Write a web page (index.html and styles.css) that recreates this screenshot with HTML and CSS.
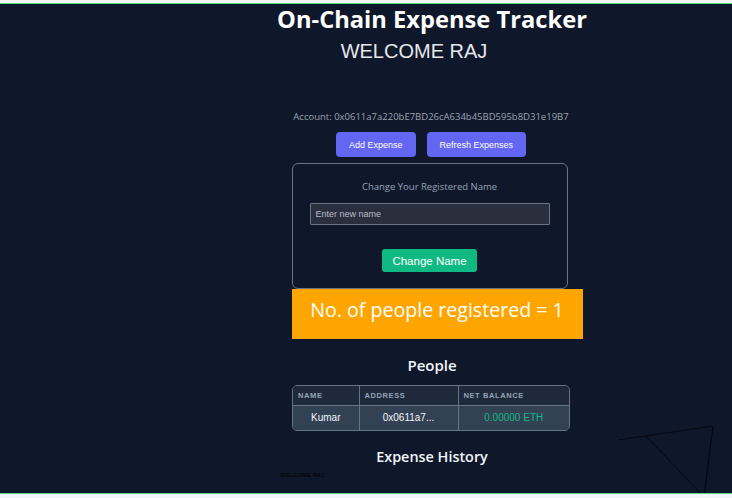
FILE: index.html
```html
<!DOCTYPE html>
<html>
<head>
<meta charset="utf-8">
<link rel="stylesheet" href="styles.css">
</head>
<body>
<div class="app">
  <main class="main">
    <h1 class="title">On-Chain Expense Tracker</h1>
    <h2 class="welcome">WELCOME RAJ</h2>
    <p class="account">Account: 0x0611a7a220bE7BD26cA634b45BD595b8D31e19B7</p>
    <div class="actions">
      <button class="btn btn-primary">Add Expense</button>
      <button class="btn btn-primary">Refresh Expenses</button>
    </div>
    <section class="card">
      <p class="card-title">Change Your Registered Name</p>
      <input class="name-input" type="text" placeholder="Enter new name">
      <button class="btn btn-green">Change Name</button>
    </section>
    <div class="count-bar">No. of people registered = 1</div>
    <h3 class="section-title people-title">People</h3>
    <div class="table-wrap">
      <table class="people">
        <thead>
          <tr><th class="c-name">Name</th><th class="c-addr">Address</th><th class="c-bal">Net Balance</th></tr>
        </thead>
        <tbody>
          <tr><td>Kumar</td><td>0x0611a7...</td><td class="bal">0.00000 ETH</td></tr>
        </tbody>
      </table>
    </div>
    <h3 class="section-title history-title">Expense History</h3>
    <p class="tiny">WELCOME RAJ</p>
  </main>
  <svg class="scribble" width="732" height="498" viewBox="0 0 732 498">
    <polyline points="618,440 713,426 704,498" fill="none" stroke="#05070d" stroke-width="1"/>
    <line x1="646" y1="436" x2="705" y2="498" stroke="#05070d" stroke-width="1"/>
  </svg>
</div>
</body>
</html>
```
FILE: styles.css
```css
* { box-sizing: border-box; }
html, body { margin: 0; padding: 0; }
body {
  background: #f3f4f6;
  width: 732px;
  height: 498px;
  overflow: hidden;
  padding-top: 3px;
  font-family: "Open Sans", "Noto Sans", sans-serif;
}
.app {
  position: relative;
  background: #0f172a;
  border-top: 1px solid #4ade80;
  border-bottom: 1px solid #4ade80;
  height: 491px;
  overflow: hidden;
}
.main {
  padding-left: 132px;
  display: flex;
  flex-direction: column;
  align-items: center;
}
.title {
  margin: 0;
  font-size: 23.7px;
  font-weight: 700;
  color: #ffffff;
  line-height: 28px;
  margin-top: 1px;
}
.welcome {
  margin: 6px 36px 0 0;
  font-family: "Liberation Sans", Arial, sans-serif;
  font-weight: 400;
  font-size: 20px;
  line-height: 24px;
  color: #e5e7eb;
}
.account {
  margin: 47px 2px 0 0;
  font-size: 9.5px;
  color: #9ca3af;
  line-height: 14px;
}
.actions {
  display: flex;
  gap: 11px;
  margin-top: 8px;
  margin-right: 2px;
}
.btn {
  border: none;
  cursor: pointer;
  color: #fff;
  font-family: "Liberation Sans", Arial, sans-serif;
}
.btn-primary {
  background: #6366f1;
  border-radius: 4px;
  height: 25px;
  font-size: 9px;
  padding: 0 13px;
}
.card {
  margin-top: 6px;
  width: 276px;
  height: 126px;
  border: 1px solid #6b7280;
  border-radius: 6px;
  display: flex;
  flex-direction: column;
  align-items: center;
  margin-left: -5px;
}
.card-title {
  margin: 16px 0 0;
  font-size: 9.5px;
  line-height: 14px;
  color: #94a3b8;
}
.name-input {
  margin-top: 9px;
  width: 240px;
  height: 22px;
  background: #2a2f3e;
  border: 1px solid #6b7280;
  border-radius: 1px;
  padding: 0 5px;
  font-family: "Liberation Sans", Arial, sans-serif;
  font-size: 9px;
  color: #e5e7eb;
}
.name-input::placeholder { color: #b6bcc8; }
.btn-green {
  margin-top: 24px;
  background: #10b981;
  border-radius: 3px;
  height: 23px;
  padding: 0 10px;
  font-size: 11.5px;
}
.count-bar {
  width: 291px;
  height: 50px;
  background: #ffa500;
  color: #fff;
  font-size: 19.6px;
  line-height: 27px;
  font-weight: 400;
  padding-top: 7px;
  text-align: center;
  margin-left: 10px;
  margin-top: 0;
}
.section-title {
  margin: 0;
  font-size: 15px;
  font-weight: 600;
  color: #f1f5f9;
  line-height: 20px;
}
.people-title { margin-top: 16px; }
.table-wrap {
  margin-top: 10px;
  width: 278px;
  border: 1px solid #64748b;
  border-radius: 5px;
  overflow: hidden;
  margin-left: -2px;
}
.people {
  width: 100%;
  border-collapse: collapse;
  font-family: "Liberation Sans", Arial, sans-serif;
}
.people th {
  background: #1e293b;
  color: #94a3b8;
  font-size: 7.5px;
  font-weight: 600;
  letter-spacing: 0.6px;
  text-transform: uppercase;
  text-align: left;
  padding: 0 5px;
  height: 19px;
  border-right: 1px solid #64748b;
  border-bottom: 1px solid #64748b;
}
.people th:last-child, .people td:last-child { border-right: none; }
.people td {
  background: #334155;
  color: #f1f5f9;
  font-size: 10px;
  text-align: center;
  height: 25px;
  border-right: 1px solid #64748b;
}
.c-name { width: 66px; }
.c-addr { width: 99px; }
.people td.bal { color: #10b981; }
.history-title { margin-top: 16px; font-size: 14.4px; }
.tiny {
  align-self: flex-start;
  margin: 5px 0 0 148px;
  font-family: "Liberation Sans", Arial, sans-serif;
  font-size: 6px;
  color: #000;
}
.scribble {
  position: absolute;
  left: 0;
  top: -4px;
  pointer-events: none;
}
```
